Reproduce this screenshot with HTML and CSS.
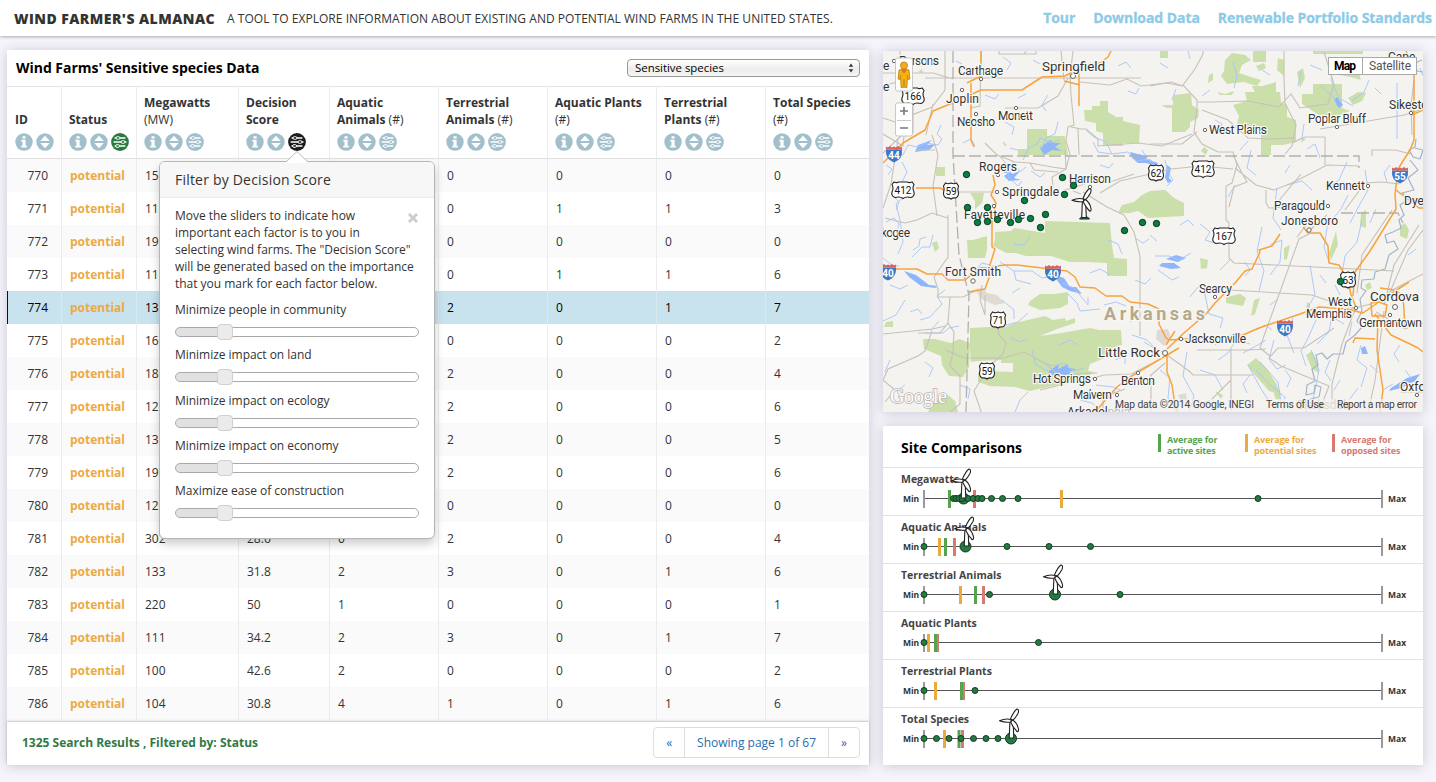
FILE: index.html
```html
<!DOCTYPE html>
<html lang="en">
<head>
<meta charset="utf-8">
<title>Wind Farmer's Almanac</title>
<link rel="stylesheet" href="styles.css">
</head>
<body>
<svg class="defs" width="0" height="0">
  <symbol id="info" viewBox="0 0 18 18"><circle cx="9" cy="9" r="8.7" fill="currentColor"/><path d="M7.500 3.200h3.100v2.300H7.500zM6.300 6.800h4.300v6h1.300v1.600H6.200v-1.600h1.300V8.400H6.300z" fill="#fff"/></symbol>
  <symbol id="sort" viewBox="0 0 18 18"><circle cx="9" cy="9" r="8.7" fill="currentColor"/><path d="M9 2.800l4.800 5.200H4.200zM9 15.200l4.800-5.200H4.200z" fill="#fff"/></symbol>
  <symbol id="filter" viewBox="0 0 18 18"><circle cx="9" cy="9" r="8.9" fill="currentColor"/><path d="M3.600 5h10.800M2.600 9h12.800M3.600 13h10.800" stroke="#fff" stroke-width="1.500"/><g fill="currentColor" stroke="#fff"><rect x="5" y="3.700" width="4" height="2.600" rx="1.300"/><rect x="10" y="7.700" width="4" height="2.600" rx="1.300"/><rect x="4.600" y="11.700" width="4" height="2.600" rx="1.300"/></g></symbol>
  <symbol id="turbine" viewBox="-13 -13 22 33" overflow="visible"><g fill="#fff" stroke="#222" stroke-width="1.100" stroke-linejoin="round"><path d="M-1.600 1h3.200l.7 16.500h-4.600z"/><path d="M-.5-1Q-6-2.500-12 .3-6 2.500-.5 1.500z"/><path d="M-1-1.500Q2-9 5.500-11.500q2.500.3 1 4.500Q4-2.500 1.300 0z"/><path d="M1-.8q4.800 3 6 9.300.3 3-1.500 2.500Q1.500 7-.8 1.800z"/></g></symbol>
</svg>

<header class="top">
  <h1>WIND FARMER'S ALMANAC</h1>
  <p>A TOOL TO EXPLORE INFORMATION ABOUT EXISTING AND POTENTIAL WIND FARMS IN THE UNITED STATES.</p>
  <nav><a>Tour</a><a>Download Data</a><a>Renewable Portfolio Standards</a></nav>
</header>

<main>
  <section class="panel data">
    <div class="data-head">
      <h2>Wind Farms' Sensitive species Data</h2>
      <div class="select"><span>Sensitive species</span><svg width="6" height="10" viewBox="0 0 6 10"><path d="M3 .5l2.200 3.300H.8zM3 9.500l2.200-3.300H.8z" fill="#333"/></svg></div>
    </div>
    <div class="table-wrap">
    <table>
      <colgroup><col class="c1"><col class="c2"><col class="c3"><col class="c4"><col class="c5"><col class="c5"><col class="c5"><col class="c5"><col class="c9"></colgroup>
      <thead><tr>
        <th>ID<div class="icons"><svg><use href="#info"/></svg><svg><use href="#sort"/></svg></div></th>
        <th>Status<div class="icons"><svg><use href="#info"/></svg><svg><use href="#sort"/></svg><svg class="green"><use href="#filter"/></svg></div></th>
        <th>Megawatts<br><i>(MW)</i><div class="icons"><svg><use href="#info"/></svg><svg><use href="#sort"/></svg><svg><use href="#filter"/></svg></div></th>
        <th>Decision<br>Score<div class="icons"><svg><use href="#info"/></svg><svg><use href="#sort"/></svg><svg class="dark"><use href="#filter"/></svg></div></th>
        <th>Aquatic<br>Animals <i>(#)</i><div class="icons"><svg><use href="#info"/></svg><svg><use href="#sort"/></svg><svg><use href="#filter"/></svg></div></th>
        <th>Terrestrial<br>Animals <i>(#)</i><div class="icons"><svg><use href="#info"/></svg><svg><use href="#sort"/></svg><svg><use href="#filter"/></svg></div></th>
        <th>Aquatic Plants<br><i>(#)</i><div class="icons"><svg><use href="#info"/></svg><svg><use href="#sort"/></svg><svg><use href="#filter"/></svg></div></th>
        <th>Terrestrial<br>Plants <i>(#)</i><div class="icons"><svg><use href="#info"/></svg><svg><use href="#sort"/></svg><svg><use href="#filter"/></svg></div></th>
        <th>Total Species<br><i>(#)</i><div class="icons"><svg><use href="#info"/></svg><svg><use href="#sort"/></svg><svg><use href="#filter"/></svg></div></th>
      </tr></thead>
      <tbody>
        <tr><td>770<td>potential<td>159<td><td><td>0<td>0<td>0<td>0</tr>
        <tr><td>771<td>potential<td>112<td><td><td>0<td>1<td>1<td>3</tr>
        <tr><td>772<td>potential<td>190<td><td><td>0<td>0<td>0<td>0</tr>
        <tr><td>773<td>potential<td>119<td><td><td>0<td>1<td>1<td>6</tr>
        <tr class="selected"><td>774<td>potential<td>132<td><td><td>2<td>0<td>1<td>7</tr>
        <tr><td>775<td>potential<td>162<td><td><td>0<td>0<td>0<td>2</tr>
        <tr><td>776<td>potential<td>180<td><td><td>2<td>0<td>0<td>4</tr>
        <tr><td>777<td>potential<td>120<td><td><td>2<td>0<td>0<td>6</tr>
        <tr><td>778<td>potential<td>132<td><td><td>2<td>0<td>0<td>5</tr>
        <tr><td>779<td>potential<td>190<td><td><td>2<td>0<td>0<td>6</tr>
        <tr><td>780<td>potential<td>120<td><td><td>0<td>0<td>0<td>0</tr>
        <tr><td>781<td>potential<td>302<td>28.6<td>0<td>2<td>0<td>0<td>4</tr>
        <tr><td>782<td>potential<td>133<td>31.8<td>2<td>3<td>0<td>1<td>6</tr>
        <tr><td>783<td>potential<td>220<td>50<td>1<td>0<td>0<td>0<td>1</tr>
        <tr><td>784<td>potential<td>111<td>34.2<td>2<td>3<td>0<td>1<td>7</tr>
        <tr><td>785<td>potential<td>100<td>42.6<td>2<td>0<td>0<td>0<td>2</tr>
        <tr><td>786<td>potential<td>104<td>30.8<td>4<td>1<td>0<td>1<td>6</tr>
      </tbody>
    </table>
    </div>
    <footer>
      <strong>1325 Search Results , Filtered by: Status</strong>
      <div class="pager"><span>«</span><span>Showing page 1 of 67</span><span>»</span></div>
    </footer>

    <aside class="popover">
      <svg class="arrow" width="22" height="12" viewBox="0 0 22 12"><path d="M0 11L11 .5 22 11v1H0z" fill="#fff"/><path d="M0 11L11 .5 22 11" fill="none" stroke="#bbb"/></svg>
      <h3>Filter by Decision Score</h3>
      <div class="pop-body">
        <div class="intro"><p>Move the sliders to indicate how<br>important each factor is to you in<br>selecting wind farms. The "Decision Score"<br>will be generated based on the importance<br>that you mark for each factor below.</p>
        <svg class="close" width="10" height="10" viewBox="0 0 10 10"><path d="M1 1l8 8M9 1L1 9" stroke="#ccc" stroke-width="2.800"/></svg></div>
        <div class="factor"><label>Minimize people in community</label><div class="track"><b></b></div></div>
        <div class="factor"><label>Minimize impact on land</label><div class="track"><b></b></div></div>
        <div class="factor"><label>Minimize impact on ecology</label><div class="track"><b></b></div></div>
        <div class="factor"><label>Minimize impact on economy</label><div class="track"><b></b></div></div>
        <div class="factor"><label>Maximize ease of construction</label><div class="track"><b></b></div></div>
      </div>
    </aside>
  </section>

  <div class="side">
  <section class="panel map">
    <svg width="540" height="361" viewBox="883 51 540 361">
      <defs>
        <g id="us"><path d="M-11-5.500L-9-8q3 1.300 4.500 0h9Q6-6.700 9-8l2 2.500Q9-2 11 2q1 4-3 5.500Q3 6 0 8.500-3 6-8 7.500-12 6-11 2-9-2-11-5.500z" fill="#fff" stroke="#222" stroke-width="1.100"/></g>
        <g id="us2"><path d="M-7.500-5L-5.500-8Q-3-6.500 0-8 3-6.500 5.500-8l2 3Q6-2 7.500 2q0 4-3 5Q2 6.500 0 8q-2-1.500-4.500-1-3-1-3-5Q-6-2-7.500-5z" fill="#fff" stroke="#222" stroke-width="1.100"/></g>
        <g id="ih"><path d="M-8-4.500h16Q9 5-0 8.500-9 5-8-4.500z" fill="#3b78c6"/><path d="M-8-4.500v-3l2 1 2-1.500 2 1.500 2-1 2 1 2-1.500 2 1.500 2-1v3z" fill="#d9605c"/></g>
      </defs>
      <rect x="883" y="51" width="540" height="361" fill="#f4f3f0"/>
      <g fill="#cbdfab">
        <path d="M1084 110h8v-4h8v-5h8v11l8 5h7v4l17 4-1 18h-16v3h-20v-13l-7-2v-8l-11-2zM1027 129h20v7h18l3 19h-50v-6h9zM1162 105h11V95l18-2 1 12 7 5-1 8-8 4v5l-5 5h-13v-24h-6zM1233 105l14-4-2-9h35l1 10 6 3 0 12 9 3v22l-13 3h-12v10h-10v-20h-12v-6l-12-5 2-8zM1302 94h11V84h29v24l8 3-12 5h-18l-18-12zM1253 51h13v11h-13zM1313 51h50v3h-50zM1160 51h8v7h-8zM936 167h9v9h-9zM970 193h14l-2 10-7 6v-8z"/>
        <path d="M1118 213l4-8 12-3 8-7 8-4 15-1 9 8 10 5v13l-36 2-10-7-8 2zM995 240v-8l16-1 3-3 31 5v-12l65 2 2 22 2 13 13 1v17l-20 0v-13l-20-1h-17l-19-6h-25l-10-3h-10l-13-7zM967 240h6l14-4v14l-2 8h-17zM1030 301l10-7h15l13-2v12l-8 4-20 2-12-5zM970 328l20-1 12 1 13-5 30-7 8 4 12-2 1 3 9-3v5l-18 6-17 7 21-3 29-5 9 2h22l1 15-10 3v7l-22 9-2 7 6 1-8 5-29 8-28 6-14-4-25-1-12-4v-9l10-2 25 1v-9h-12v-3l-23 1-7 1-1-13z"/>
        <path d="M923 339h12l16 4 8-4 11 4-1 24-6 10-14-1-7-11-1-9-17-7zM928 412l5-10 15-7 7 6 3 11zM1306 139l-5 4 1-5zM1348 98l10-6 8 1-4 8-9 4zM1209 75l4-2v7l-5 3zM1204 147l4 3-2 5-5-4zM1225 60l7-7 13 2 6 5-9 5-3 8 12 4 10 3-4 6-13-4-17 2-6-8 3-5zM1217 92l8 2 9-3-2 4-12 0zM1256 66l8-3 2 5-7 3zM1252 86l10 0 14-4 0 12-20 0zM1278 58l6 2 0 16-7-6zM1297 72l6-4 2 10-5 10zM1226 297l14-3 6 4-3 8-17-3zM1254 300l6-2-5 16-4 2zM1329 253l7-22 2 14-7 15zM1361 213l5-3 0 18-6-2zM1400 226l5-3 4 7-2 9-7-3zM1247 365l9-7 10 10 10 15 5 12-12-4-14-16zM1306 355l6-4 6 12 1 10-7-4zM1330 58h10v10l18 2 3 10-10-3-12-2-10-12zM1284 248l6-3-3 14-3 1zM1307 302l3 2v7l-4 0zM1365 285l5-3 2 6-5 2zM1200 258l8 2-1 8-6 1zM932 243l5-2 2 7-4 4zM886 322l7-1v6h-9zM1003 141l4 4-3 1zM918 72l4-3 1 4zM1215 391l8 4-2 4zM1273 390h7v10l-4 0z"/>
      </g>
      <path d="M975 289l8-1 4 5 10 2 8 8-10 2-14-6zM1157 330l11-1 3 9-7 8-8-7zM1178 395l8-2 1 9-6-1z" fill="#dfdad4"/>
      <g fill="#8fb6fa">
        <path d="M1040 148l10-8 4 3 7 0-6 4 7 4-10-1-8 5zM1003 173l6-4 3 5 8-3-6 7 7 2-12 1-5-5 4-3zM918 145l14-5-5 5 9-1-7 6-14 2zM904 271l12 4 13 10 9 1-3 2-14-2-12-9zM1058 276l6 2 6 9 6 0 6 7-12-3-8-4-5-7zM1049 371l10-7-1 5 10-5 0 4 8 1-7 3 8 3-12 0-3 5-6-4-9 0zM1162 263l12 0 7 5-10 1-12-3zM1166 259l10-4 10 3-8 4zM1391 388l16-10 13-4-5 7-14 7-12 3zM1361 348l4-2 3 8-6 0zM1130 152l8 2 10 2-2 3 12 4-2 3-10-3-8 0-6-5zM1167 165l4 3-2 10 3 3-4 2-3-5zM1337 97l6 8-4 3-5-8z"/>
      </g>
      <g class="water">
        <path d="M941 125l-4 9 5 5-4 6-12-2-8 4-10-2-5 10-12 3M902 162l5 10-5 10 3 14-9 8 4 16 3 22-5 12M883 258l10 8 6 0M912 257l10-10 8 0 3-12M905 300l-9 15-13 6M945 290l-8 6 5 8-12 13-10 3M1000 157l10 10-2 10 10 9 4-5M1012 161l8 11 6-5M1023 160l6-12 8-4 3-6 12 5 7-3M1058 122l-3 12-9 4-4 10M1086 130l8 7 12 5 6 12 16-2 8 9 14-2 8 10M1093 142l5 10 14 2M1142 150l5 8M1165 160l3 12 5 8-6 6M1030 237l-6 8-10-1M972 275l10-12 8 2M1000 262l14 9 18 0 10 7 18-3M1014 271l2 9 15 4M1062 283l12 5 14 17 0-8M1068 294l9 9 3 8 20-2M1104 305l12-3 10 4M1002 300l12 10 0 9M1028 313l-10 9-12 3M925 333l18 0 6-5 10-2M930 331l9-10M1132 335l15 5 8 8M1144 342l10 6 10 4M1096 385l17 2 9 4M1080 400l12 3 8 7M1015 412l5-12 8-8M1032 350l4 15 12 6M1044 363l10 3 10-3 10 8 10-3M1115 360l10-4 0 8M890 360l-5 12"/>
        <path d="M1188 51l2 8M1233 62l4 14-3 12M1301 71l-3 15M1333 65l-2 15 8 18 14 8M1320 85l14 13 3 8M1397 83v56M1369 80l-5 12-12 9M1310 65l12 5M1292 143l10-5 2-14M1320 158l-5-14-8 5M1251 150l-4 18 9 7M1277 188l-4 30 8 12M1287 185l15-4 10 9M1262 227l-5 24 7 20-5 20M1235 185l-7 12M1347 162l-8 18-12 8M1365 170l3 20-8 14-10 19M1348 195l-7 14-10 12M1362 220l-5 22-12 14-3 18M1376 209l-6 14M1328 222l-4 25 5 15M1200 224l10 8-5 8 10 3M1155 256l14 0 10 4 12-7M1158 270l14 10 7-3M1270 245l12-5-2 22-10 13M1310 265l5 30-8 14M1230 260l-10 10M1204 290l5 24 14 4-3 10M1190 297l8-10M1160 370l10 8-2 20 8 14M1187 352l-4 24 11 20-5 16M1200 370l15 5 8 15M1218 360l10-7 8-13 14 4M1243 353l13-7 10-6M1256 330l9-5 7 5M1248 365l12 22 12 19M1256 370l14 15 15 12-2 14M1260 362l18 20 3 20M1293 318l-6 17 7 18M1316 320l-8 18-7 13 5 15M1311 350l8 20-6 30M1333 310l-4 22-12 12M1352 322l-3 14M1361 345l-4 15 10 8-6 19M1383 390l10-6M1334 318l10 6M1240 150l8-9M1274 340l-5 19 8 10 9-4M1172 100l4-11M1210 90l-8 6M1420 68l3 8M1358 388l-9 12M1405 370l6 8"/>
        <path d="M886 165l6 4-4 6M893 196l6 6-3 8M886 222l8-4 5 6-3 12M913 250l6-4 1-7 6-2M890 285l10 4 8-4M910 312l8-3 4 5M956 61l6 3M1003 57l8 6-4 7M1033 60l7 4M1118 66l8-4 5 6M1128 91l8 3 3-6M1048 95l-6 10 4 6M1018 98l8-4M985 95l10 4 4-5M1005 122l9 5-2 8M963 143l8-4 4 7M1010 148l8 2M1031 171l9 6 5-4M1100 165l9 3 4-5M1108 240l10 4 4 10M1135 238l8 5 6-4M1135 280l10 4 6-6M1090 273l10-4 9 5M1020 288l-8 5M925 362l8 6-4 9M905 385l-8 6 4 8M960 385l10 4-2 10M1010 337l9 5 8-3M1060 345l10-5 8 5M1130 322l8-5M1215 345l8-6M1250 375l-7 9 4 9M1330 360l-5 12 6 9M1285 370l6 8-4 9M1340 380l-6 10M1400 345l-6 9 5 8M1370 365l8 7M1408 255l8-6M1320 275l6 8M1335 285l5 10M1270 305l8-6M1245 262l5 8-5 6M1180 225l8-5 6 6M1150 235l7 6M1160 63l8 5M1215 120l7 4-3 7M1262 70l8 5M1390 165l-6 8 3 9M1375 88l6 6M1290 165l-5 8"/>
      </g>
      <path d="M1422 60l-7 3 2 8 6 1M1415 148l8 2-3 9-7-2-4-7 6-3 1-8M1410 160l8 10-10 8 6 12-12 3 8 7M1407 200l-7 5 4 10-5 5 2 8-8 4-8 3 2 8 7-2 4 8-9 6-4 14-10 3-1 7-12 1-1 8 5 3-6 8 2 12-5 10 5 6-7 8-9 7-3 12-10 0-6 5-5-6-6 2 2 10-6 4 3 12-8 4-1 10 8-2 1-8 6 2-2 10-12 3-1 12 4 3-6 6-14 3-4 6 7 4-3 9" fill="none" stroke="#a3b4ca" stroke-width="1.200" stroke-linejoin="round"/>
      <g class="road">
        <path d="M883 73h50l20 6M900 79v-28M945 51v39l-13 17-20 8-10 20-19 18M925 78h56l160 0M999 51v3h25l2-3M1024 54h12v-3M981 51l-1 55-10 2M883 134l20 12 2-20M1005 108h33l20-12 10-18M1073 51l-3 25 1 19 3 30-6 2-2 14 4 13-4 15-14 8 1 10-5 3M1064 80l-3-29M1080 82l30 3 17-6 14 7 25-3 17 3M1071 127l10 2 5 0 12 10 0 7 40-3 24 3 30-12M1078 129l1 26M883 118l12 4 18 10v-28M932 135l6 20-5 31 4 30M935 150h-18M898 139l-7 45-8 24M883 86l24-7M933 104l-7 31"/>
        <path d="M1203 51v3l-8 15-12 16 14 15 0 8-3 24 8 12 16 8 15 0 4 13-5 18-6 3v34l3 3v35l5 5 160 8M1150 86l21-4 12 4M1197 102l15 0 36-1 31 6 12-13 9 14 28-4 6-20-10-32M1284 51v28l1 24 11 22-4 21-7 8M1202 110l26 10 20 18 22 1 25-1M1150 144h32l15-12M1320 129l84-14 19-6M1372 156v-6h23l16 4M1325 137v28M1325 137h-20l-11 5M1233 155l9 18 5 9-13 5-5 20M1235 168l21 17 18 5 18-7 35-18 32 1M1266 190v13l3 5 17-1M1414 80l-3 25 1 30M1151 174l20-5 30-3 32 3"/>
        <path d="M1030 163l-15-1-18-7-12-12M1030 163l22 4 14 2-1-19M1030 163l4 7 24 2M950 192h30l14 0M1065 190l23-7 25-2 21-7M1073 191l8 3M1083 192l24 15 17 8 10 17 6 24v80M1150 174l-30 7-20 12M885 218l20 5 12-3 15-7 16 5M948 215v42l-14 20 4 12 0 8 25 0 12-6M950 297l-2 26-8 10h-22M883 334l30-3 19-2 14-3M932 331l-7 20-7 5-30 13-5 11 12 10-10 12M948 323l6 9-1 20-3 14 10 10 0 28-10 8M946 350l18 8 40 0 20-6 22 12 18 16 24 3M982 285l-2 15 5 15M985 295l0 20M998 325l1 10 7 8-3 11-8 7-13 17-8 13 7 20-3 13"/>
        <path d="M1083 381l21-6 27-1 20-10M1040 390l24-6 15-10M1075 374l22-1M1103 412v-15l22-8M1167 355l22 16 4 4h60M1231 349v62M1197 350h50l19-1M1231 380l-20 20-20 7M1269 358l9-10h26l30-20M1269 358l12 8 48 20-10 26M1264 336l-4 12 10 8M1264 336l35-97 10-5M1230 290l82 5 23 8 20 5M1332 224l-25 0-10 13M1356 307l-14 37-10 40 0 20M1392 210l-30 45-5 38M1384 311l-9 70-7 31M1419 225l-25 40-10 40M1423 230l-15 20-18 42M1376 312l29 17 18-6M1371 304l-20 5M1423 274l-25 13-20 12M1345 210l20-27 17-1 17 2M1327 215l-17 15M1423 392h-22M1150 376l15-13M1151 376l0 36M1273 210l8-12 20-24"/>
      </g>
      <g class="highway">
        <path d="M883 163l20-20 22-13 8-19 17-7 31-14h41l20-13 23-1 15-8 20-5 8-6 3-6M981 51v28M967 83l14-7M971 83v57l3 7M1079 65v41M1064 81l16 4M916 188h24l8 4M993 175l2 10-4 10 5 8-4 14v30l3 2-7 22 1 7-4 11-17 3M883 269h34l10 5h15l6 6 17 0 15-12 25-3h12l50 6 8 6 5 10 15 1 11 8h16l8 6 18 2 11 5v15l7 14 3 2 50-3 24-2 16-7 41-14 19-7 28 2 16 4 23-16 23-15"/>
        <path d="M1095 412l22-25 13-10 37-22 12-7M1167 349l17-16 23-20 8-10 20-20 10-12 7-2 8-17-1-2 13-4 8-12M1303 227l5 6h12l8 13 1 17 10 2 9 15 3 15 5 12M1406 51l8 22v67l-4 10-12 19-3 25 1 15-26 42-15 21-2 24M1396 190l23 18 4 0M1412 115l11-5M1371 303l8-1 8 3-2 11h-13zM1378 317l-1 33 6 40-3 22M1380 288l15 2 8 6 2 30M1375 314l16 21 17 8 10 5 5 4M1353 343l2-5 20 1M1167 355v17l5 13 3 20 3 7M1166 345l9-14"/>
      </g>
      <path d="M953 51v104l6 100 10 40-3 117M953 156h406v12M1341 213h57l5 10" fill="none" stroke="#b3b0ac" stroke-width="1.300" stroke-dasharray="12 4"/>
      <g fill="#fff" stroke="#666"><circle cx="894" cy="61" r="1.700"/><circle cx="981" cy="79" r="1.700"/><circle cx="962" cy="90" r="1.700"/><circle cx="1016" cy="108" r="1.700"/><circle cx="976" cy="114" r="1.700"/><circle cx="1073" cy="76" r="2.500"/><circle cx="1205" cy="130" r="1.700"/><circle cx="1337" cy="127" r="1.700"/><circle cx="1411" cy="113" r="1.700"/><circle cx="998" cy="175" r="1.700"/><circle cx="997" cy="192" r="1.700"/><circle cx="994" cy="206" r="1.700"/><circle cx="1090" cy="187" r="1.700"/><circle cx="1368" cy="186" r="1.700"/><circle cx="1328" cy="206" r="1.700"/><circle cx="1309" cy="230" r="2.200"/><circle cx="973" cy="281" r="2.200"/><circle cx="1215" cy="297" r="1.700"/><circle cx="1181" cy="339" r="1.700"/><circle cx="1165" cy="353" r="2.500"/><circle cx="1138" cy="373" r="1.700"/><circle cx="1095" cy="379" r="1.700"/><circle cx="1117" cy="395" r="1.700"/><circle cx="1356" cy="308" r="1.700"/><circle cx="1395" cy="307" r="2.500"/><circle cx="1390" cy="315" r="1.700"/><circle cx="1417" cy="395" r="1.700"/></g>
      <g class="places">
        <text x="899" y="65" textLength="40">Parsons</text><text x="883" y="70">e</text><text x="883" y="91">e</text>
        <text x="958" y="75" textLength="45">Carthage</text><text class="big" x="1042" y="71" textLength="63">Springfield</text>
        <text x="946" y="103" textLength="33">Joplin</text><text x="957" y="126" textLength="38">Neosho</text><text x="998" y="120" textLength="35">Monett</text>
        <text x="1209" y="134" textLength="58">West Plains</text><text x="1308" y="123" textLength="58">Poplar Bluff</text><text x="1389" y="109">Sikeston</text><text x="1388" y="61">Cape</text>
        <text x="979" y="171" textLength="38">Rogers</text><text x="1002" y="196" textLength="57">Springdale</text><text x="964" y="219" textLength="61">Fayetteville</text><text x="1069" y="183" textLength="42">Harrison</text>
        <text x="1326" y="190" textLength="39">Kennett</text><text x="1274" y="210" textLength="51">Paragould</text><text x="1281" y="225" textLength="57">Jonesboro</text><text x="1404" y="205">Dyer</text>
        <text x="881" y="237" textLength="29">kogee</text><text x="945" y="276" textLength="56">Fort Smith</text><text x="1199" y="293" textLength="33">Searcy</text>
        <text x="1328" y="306" textLength="24">West</text><text x="1306" y="318" textLength="46">Memphis</text><text class="big" x="1370" y="301" textLength="49">Cordova</text><text x="1359" y="327" textLength="63">Germantown</text>
        <text x="1185" y="343" textLength="61">Jacksonville</text><text class="big" x="1098" y="357" textLength="62">Little Rock</text><text x="1033" y="383" textLength="58">Hot Springs</text><text x="1121" y="385" textLength="34">Benton</text><text x="1073" y="399" textLength="39">Malvern</text>
        <text x="1400" y="391">Oxford</text><text x="1067" y="416">Arkadelphia</text><text x="1296" y="409" opacity=".5">Clarksdale</text>
        <text class="state" x="1104" y="320" textLength="101">Arkansas</text>
      </g>
      <g class="shields">
        <use href="#us" x="913" y="96"/><text x="913" y="100">166</text><use href="#us" x="903" y="190"/><text x="903" y="194">412</text><use href="#us2" x="951" y="191"/><text x="951" y="195">59</text>
        <use href="#us2" x="1156" y="173"/><text x="1156" y="177">62</text><use href="#us" x="1203" y="169"/><text x="1203" y="173">412</text><use href="#us" x="1224" y="236"/><text x="1224" y="240">167</text>
        <use href="#us2" x="998" y="320"/><text x="998" y="324">71</text><use href="#us2" x="987" y="371"/><text x="987" y="375">59</text><use href="#us2" x="1348" y="280"/><text x="1348" y="284">63</text>
        <g class="inter"><use href="#ih" x="894" y="154"/><text x="894" y="159">44</text><use href="#ih" x="888" y="272"/><text x="888" y="277">40</text><use href="#ih" x="1053" y="273"/><text x="1053" y="278">40</text><use href="#ih" x="1285" y="328"/><text x="1285" y="333">40</text><use href="#ih" x="1400" y="175"/><text x="1400" y="180">55</text></g>
      </g>
      <g fill="#0b7d40" stroke="#063a1e"><circle cx="966.500" cy="174.500" r="3.200"/><circle cx="1062.500" cy="177.500" r="3.200"/><circle cx="1073.500" cy="185.500" r="3.200"/><circle cx="1064.500" cy="194.500" r="3.200"/><circle cx="1024.500" cy="200.500" r="3.200"/><circle cx="967.500" cy="207.500" r="3.200"/><circle cx="987.500" cy="207.500" r="3.200"/><circle cx="977.500" cy="222.500" r="3.200"/><circle cx="987.500" cy="221.500" r="3.200"/><circle cx="997.500" cy="219.500" r="3.200"/><circle cx="1010.500" cy="222.500" r="3.200"/><circle cx="1018.500" cy="219.500" r="3.200"/><circle cx="1030.500" cy="218.500" r="3.200"/><circle cx="1045.500" cy="214.500" r="3.200"/><circle cx="1040.500" cy="227.500" r="3.200"/><circle cx="1124.500" cy="230.500" r="3.200"/><circle cx="1142.500" cy="222.500" r="3.200"/><circle cx="1156.500" cy="223.500" r="3.200"/><circle cx="1340.500" cy="281.500" r="3.200"/></g>
      <path d="M1079.500 219h10l-2-2h-6z" fill="#0b7d40" stroke="#222"/>
      <use href="#turbine" x="1071" y="187" width="22" height="33"/>
      <text class="google" x="890" y="403" textLength="57">Google</text>
      <rect x="1107" y="399" width="316" height="13" fill="#f4f3f0" opacity=".72"/>
      <g class="legal"><text x="1115" y="408" textLength="139">Map data ©2014 Google, INEGI</text><text x="1266" y="408" textLength="58">Terms of Use</text><text x="1337" y="408" textLength="80">Report a map error</text></g>
      <g fill="#fff" stroke="#bbb" stroke-width=".8"><rect x="895.500" y="58" width="17" height="33" rx="2"/><rect x="895.500" y="103" width="17" height="33" rx="2"/></g>
      <path d="M897 120.500h14" stroke="#ccc"/><path d="M900 111h8M904 107v8M900 128h8" stroke="#777" stroke-width="1.600"/>
      <path d="M899 70q5-3 10 0l1 9-2 .5-.5-4-.5 12h-2.500l-.5-8-.5 8H901l-.5-12-.5 4-2-.5z" fill="#f3b10d" stroke="#b57b09" stroke-width=".7"/><path d="M901 69.500h6l-3 4z" fill="#e8643a"/><circle cx="904" cy="65.500" r="3.600" fill="#f2ab1b" stroke="#b57b09" stroke-width=".7"/>
      <g fill="#fff" stroke="#a9a9a9"><rect x="1328.500" y="57.500" width="34" height="17"/><rect x="1362.500" y="57.500" width="54" height="17"/></g>
      <g class="ctl"><text x="1334" y="70" class="on" textLength="22">Map</text><text x="1369" y="70" textLength="42">Satellite</text></g>
    </svg>
  </section>

  <section class="panel compare">
    <div class="cmp-head">
      <h2>Site Comparisons</h2>
      <ul><li class="act">Average for<br>active sites</li><li class="pot">Average for<br>potential sites</li><li class="opp">Average for<br>opposed sites</li></ul>
    </div>
    <svg class="row" viewBox="883 1 540 47"><text class="name" x="901" y="16">Megawatts</text><text x="903" y="35">Min</text><text x="1388" y="35">Max</text><path class="axis" d="M924 31.500h458"/><path class="end" d="M924 23v18M1382 23v18"/>
      <path class="a" d="M949.500 23v18"/><path class="o" d="M974.500 23v18"/><path class="p" d="M1061.500 23v18"/>
      <g class="dots"><circle cx="963.500" cy="31.500" r="5.500"/><circle cx="953.500" cy="31.500" r="3"/><circle cx="956" cy="31.500" r="3"/><circle cx="959" cy="31.500" r="3"/><circle cx="962" cy="31.500" r="3"/><circle cx="968" cy="31.500" r="3"/><circle cx="973" cy="31.500" r="3"/><circle cx="978" cy="31.500" r="3"/><circle cx="982" cy="31.500" r="3"/><circle cx="991.500" cy="31.500" r="3"/><circle cx="1002.500" cy="31.500" r="3"/><circle cx="1018" cy="31.500" r="3"/><circle cx="1258" cy="31.500" r="3"/></g><use href="#turbine" x="950.500" y=".5" width="22" height="33"/></svg>
    <svg class="row" viewBox="883 1 540 47"><text class="name" x="901" y="16">Aquatic Animals</text><text x="903" y="35">Min</text><text x="1388" y="35">Max</text><path class="axis" d="M924 31.500h458"/><path class="end" d="M924 23v18M1382 23v18"/>
      <path class="p" d="M939.500 23v18"/><path class="a" d="M945.500 23v18"/><path class="o" d="M954.500 23v18"/>
      <g class="dots"><circle cx="924" cy="31.500" r="3"/><circle cx="965.500" cy="31.500" r="5.500"/><circle cx="1007" cy="31.500" r="3"/><circle cx="1049" cy="31.500" r="3"/><circle cx="1090.500" cy="31.500" r="3"/></g><use href="#turbine" x="953.500" y=".5" width="22" height="33"/></svg>
    <svg class="row" viewBox="883 1 540 47"><text class="name" x="901" y="16">Terrestrial Animals</text><text x="903" y="35">Min</text><text x="1388" y="35">Max</text><path class="axis" d="M924 31.500h458"/><path class="end" d="M924 23v18M1382 23v18"/>
      <path class="p" d="M960.500 23v18"/><path class="a" d="M975.500 23v18"/><path class="o" d="M983.500 23v18"/>
      <g class="dots"><circle cx="924" cy="31.500" r="3"/><circle cx="989.500" cy="31.500" r="3"/><circle cx="1055" cy="31.500" r="5.500"/><circle cx="1120" cy="31.500" r="3"/></g><use href="#turbine" x="1042.500" y=".5" width="22" height="33"/></svg>
    <svg class="row" viewBox="883 1 540 47"><text class="name" x="901" y="16">Aquatic Plants</text><text x="903" y="35">Min</text><text x="1388" y="35">Max</text><path class="axis" d="M924 31.500h458"/><path class="end" d="M924 23v18M1382 23v18"/>
      <path class="p" d="M928.500 23v18"/><path class="o" d="M937.500 23v18"/><path class="a" d="M935.500 23v18"/>
      <g class="dots"><circle cx="924" cy="31.500" r="3"/><circle cx="1038.500" cy="31.500" r="3"/></g></svg>
    <svg class="row" viewBox="883 1 540 47"><text class="name" x="901" y="16">Terrestrial Plants</text><text x="903" y="35">Min</text><text x="1388" y="35">Max</text><path class="axis" d="M924 31.500h458"/><path class="end" d="M924 23v18M1382 23v18"/>
      <path class="p" d="M935.500 23v18"/><path class="o" d="M963.500 23v18"/><path class="a" d="M961.500 23v18"/>
      <g class="dots"><circle cx="924" cy="31.500" r="3"/><circle cx="975" cy="31.500" r="3"/></g></svg>
    <svg class="row" viewBox="883 1 540 47"><text class="name" x="901" y="16">Total Species</text><text x="903" y="35">Min</text><text x="1388" y="35">Max</text><path class="axis" d="M924 31.500h458"/><path class="end" d="M924 23v18M1382 23v18"/>
      <path class="p" d="M944.500 23v18"/><path class="o" d="M962.500 23v18"/><path class="a" d="M959 23v18"/>
      <g class="dots"><circle cx="924" cy="31.500" r="3"/><circle cx="936.500" cy="31.500" r="3"/><circle cx="949" cy="31.500" r="3"/><circle cx="961" cy="31.500" r="3"/><circle cx="973.500" cy="31.500" r="3"/><circle cx="986" cy="31.500" r="3"/><circle cx="998" cy="31.500" r="3"/><circle cx="1011" cy="31.500" r="5.500"/></g><use href="#turbine" x="998.500" y=".5" width="22" height="33"/></svg>
  </section>
  </div>
</main>
</body>
</html>
```
FILE: styles.css
```css
* { box-sizing: border-box; }
body { margin: 0; height: 782px; overflow: hidden; background: #f6f5fb; font: 12px/17px "Open Sans", sans-serif; color: #333; }
h1, h2, h3, p, ul { margin: 0; padding: 0; }
.defs { position: absolute; }

.top { display: flex; align-items: center; height: 36px; padding: 0 4px 0 14px; background: #fff; box-shadow: 0 1px 3px rgba(0,0,0,.3); white-space: nowrap; }
.top h1 { font-size: 14px; font-weight: 800; letter-spacing: .45px; width: 213px; color: #333; }
.top p { font-size: 12px; letter-spacing: .035px; }
.top nav { margin-left: auto; display: flex; gap: 18px; font-size: 14px; font-weight: 700; letter-spacing: -.07px; color: #8ecae6; -webkit-text-stroke: .3px #8ecae6; }
.top nav a { margin-top: -1px; }

main { display: flex; gap: 14px; padding: 14px 13px 17px 7px; }
.panel { background: #fff; box-shadow: 0 1px 12px rgba(40,30,70,.22); }
h2 { font-size: 14px; font-weight: 700; color: #000; white-space: nowrap; }

.data { position: relative; width: 862px; height: 715px; display: flex; flex-direction: column; }
.data-head { height: 36px; padding: 0 9px 2px; display: flex; align-items: center; justify-content: space-between; }
.data-head h2 { letter-spacing: -.03px; }
.select { display: flex; align-items: center; justify-content: space-between; width: 233px; height: 18px; margin-top: 2px; padding: 0 5px 0 7px; border: 1px solid #999; border-radius: 4px; background: linear-gradient(#fff, #ececec 60%, #f6f6f6); font-size: 11.400px; line-height: 16px; color: #000; }

.table-wrap { height: 636px; overflow: hidden; }
table { table-layout: fixed; width: 862px; border-collapse: separate; border-spacing: 0; }
.c1 { width: 55px; } .c2 { width: 75px; } .c3 { width: 102px; } .c4 { width: 91px; } .c5 { width: 109px; } .c9 { width: 103px; }
th { height: 73px; padding: 0 0 7px 7px; vertical-align: bottom; text-align: left; font-weight: 700; border-top: 1px solid #e4e4e4; border-bottom: 1px solid #e0e0e0; border-right: 1px solid #ebebeb; white-space: nowrap; }
th:first-child { padding-left: 8px; }
th:last-child, td:last-child { border-right: 0; }
th i { font-style: normal; font-weight: 400; }
.icons { display: flex; gap: 3px; margin-top: 5px; color: #a1c0cb; }
.icons svg { width: 18px; height: 18px; }
.icons .green { color: #2a7a40; }
.icons .dark { color: #1d1d1f; }
td { height: 33px; padding: 0 0 0 8px; border-right: 1px solid #ebebeb; }
td:first-child { text-align: right; padding-right: 13px; }
td:nth-child(2) { color: #ecaa45; font-weight: 700; }
tbody tr:nth-child(odd) { background: #fafafa; }
tbody .selected { background: #c8e2ee !important; color: #000; }
.selected td { border-right-color: #d9e9f0; }
.selected td:first-child { box-shadow: inset 1px 0 #111; }

.data footer { position: relative; flex: 1; display: flex; align-items: center; justify-content: space-between; padding: 0 9px 2px 15px; background: #fff; box-shadow: 0 -1px 2px rgba(0,0,0,.25); }
footer strong { color: #2f7a45; }
.pager { display: flex; border: 1px solid #ddd; border-radius: 4px; height: 31px; line-height: 29px; color: #2a6cad; }
.pager span { padding: 0 12px; }
.pager span + span { border-left: 1px solid #ddd; }

.popover { position: absolute; left: 152px; top: 111px; width: 276px; height: 378px; background: #fff; border: 1px solid #b5b5b5; border-radius: 6px; box-shadow: 0 5px 10px rgba(0,0,0,.2); }
.arrow { position: absolute; left: 126px; top: -11px; }
.popover h3 { height: 36px; padding: 9px 15px 0; font-size: 14px; letter-spacing: .2px; line-height: 18px; font-weight: 400; background: #f7f7f7; border-bottom: 1px solid #ebebeb; border-radius: 5px 5px 0 0; }
.pop-body { padding: 9px 15px; }
.intro { display: flex; justify-content: space-between; height: 85px; white-space: nowrap; }
.intro p { width: 0; letter-spacing: -.02px; }
.close { margin: 6px 1px; flex: none; }
.factor { height: 45.300px; padding-top: 9px; }
.factor label { display: block; letter-spacing: -.03px; }
.track { position: relative; width: 244px; height: 10px; margin-top: 9px; border: 1px solid #aaa; border-radius: 5px; background: linear-gradient(90deg, #e1e1e1 50px, #fff 50px); }
.track b { position: absolute; left: 41px; top: -4px; width: 16px; height: 16px; border: 1px solid #d0d0d0; border-radius: 4px; background: #ebebeb; }

.side { display: flex; flex-direction: column; gap: 14px; padding-top: 1px; width: 540px; }
.map { height: 361px; }
.map svg { display: block; font-family: Roboto, sans-serif; }
.water { fill: none; stroke: #a5c4fb; stroke-width: .9; }
.road { fill: none; stroke: #c7c1b7; stroke-width: 1.100; }
.highway { fill: none; stroke: #f8a33c; stroke-width: 1.500; stroke-linejoin: round; }
.places text { font-size: 12px; fill: #333; stroke: #f8f7f4; stroke-width: 2.500px; paint-order: stroke; }
.places .big { font-size: 13.500px; }
.places .state { font-size: 18px; font-weight: 700; fill: #b5a98c; }
.shields text { font-size: 10px; text-anchor: middle; fill: #111; }
.shields .inter text { fill: #fff; font-weight: 700; }
.google { font: 20px "Liberation Serif", serif; fill: #fff; stroke: #b4b4b4; stroke-width: 1.500px; paint-order: stroke; }
.legal text { font-size: 10.300px; fill: #444; }
.ctl text { font-size: 12px; fill: #555; }
.ctl .on { font-weight: 700; fill: #000; }

.compare { height: 339px; }
.cmp-head { display: flex; height: 41px; padding: 0 18px; justify-content: space-between; }
.cmp-head h2 { line-height: 43px; }
.cmp-head ul { display: flex; padding-top: 8px; list-style: none; font-size: 9px; letter-spacing: -.15px; line-height: 11px; font-weight: 700; white-space: nowrap; }
.cmp-head li { width: 87px; height: 18px; border-left: 3px solid; padding-left: 6px; }
.cmp-head li:last-child { width: 73px; }
.act { color: #56a44f; } .pot { color: #ecaa45; } .opp { color: #d87a70; }
.row { display: block; width: 540px; height: 48px; overflow: visible; border-top: 1px solid #e2e2e2; }
.row text { font-size: 8.500px; font-weight: 700; fill: #333; }
.row .name { font-size: 10.500px; fill: #444; }
.row path { fill: none; }
.axis { stroke: #555; }
.end { stroke: #999; stroke-width: 2; }
.a, .p, .o { stroke-width: 3; }
.a { stroke: #56a44f; } .p { stroke: #ecaa3c; } .o { stroke: #d87a70; }
.dots { fill: #247a41; stroke: #143a22; }
```
